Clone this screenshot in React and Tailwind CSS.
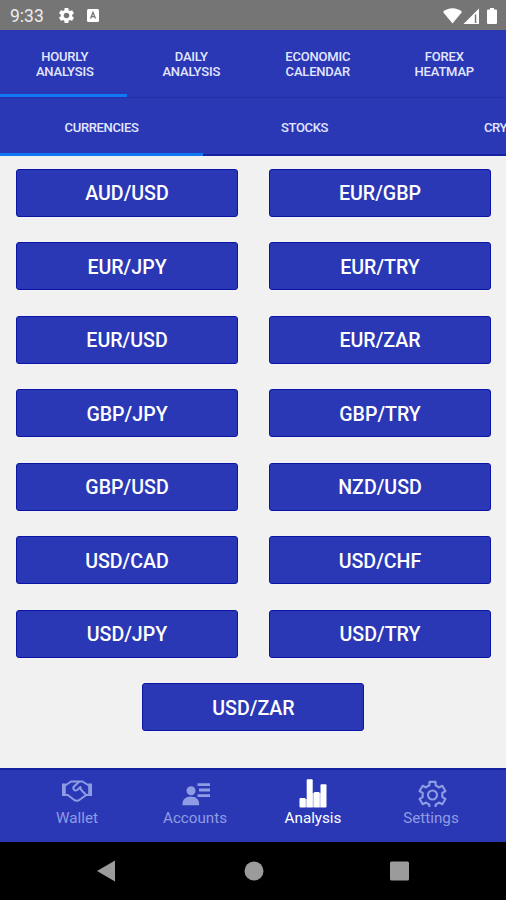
import React, { useState } from 'react';
import { MdSettings } from 'react-icons/md';

const SECTIONS = [
    ['HOURLY', 'ANALYSIS'],
    ['DAILY', 'ANALYSIS'],
    ['ECONOMIC', 'CALENDAR'],
    ['FOREX', 'HEATMAP'],
];

const MARKETS = ['CURRENCIES', 'STOCKS', 'CRYPTO'];

const PAIRS = [
    'AUD/USD', 'EUR/GBP',
    'EUR/JPY', 'EUR/TRY',
    'EUR/USD', 'EUR/ZAR',
    'GBP/JPY', 'GBP/TRY',
    'GBP/USD', 'NZD/USD',
    'USD/CAD', 'USD/CHF',
    'USD/JPY', 'USD/TRY',
    'USD/ZAR',
];

function WalletIcon() {
    return (
        <svg className="mb-1.5" width="30" height="22" viewBox="0 0 30 22" fill="none" stroke="currentColor" strokeWidth="2" strokeLinejoin="round" strokeLinecap="round">
            <path d="M0 3.500h3.800v12.500H0zM26.200 3.500H30v12.500h-3.800z" fill="currentColor" stroke="none" />
            <path d="M4 5L9 1.500h11.500L26 5" />
            <path d="M4 15h1.800l6.200 4.800q2.800 1.700 5.600 0L24.200 15H26" />
            <path d="M17 1.800L12 6.500c-1.800 2 .5 5.200 3.300 3.500l3.200-3c-.8 3.200 2 3.500 5.500 7.800" />
        </svg>
    );
}

function AccountsIcon() {
    return (
        <svg className="ml-px" width="28" height="24" viewBox="0 0 28 24" fill="currentColor">
            <circle cx="9" cy="8.800" r="4.500" />
            <path d="M0.500 23.300v-1.800c0-4.200 3.500-7 8.300-7s8.300 2.800 8.300 7v1.800z" />
            <path d="M15.500 1.200H28v2.800H15.500zM17 6.600h11v2.800H17zM15.500 12.200H28V15H15.500z" />
        </svg>
    );
}

function AnalysisIcon() {
    return (
        <svg width="28" height="29" viewBox="0 0 28 29" fill="currentColor">
            <path d="M6 20h2v8.500H6zM13 14h2v14.500h-2zM20 14h2v14.500h-2z" opacity="0.65" />
            <rect x="0.500" y="19" width="6" height="9.500" rx="1" />
            <rect x="7.700" y="0.300" width="6" height="28.200" rx="1" />
            <rect x="14.800" y="13" width="5.800" height="15.500" rx="1" />
            <rect x="21.500" y="5.300" width="6" height="23.200" rx="1" />
        </svg>
    );
}

function SettingsIcon() {
    return (
        <svg className="ml-[3px]" width="29" height="27" viewBox="-14.5 -15 29 27" fill="none" stroke="currentColor" strokeWidth="2.100" strokeLinejoin="round">
            <path d="M-3.200-9.400L-3-13.100H3L3.200-9.400Q5 -8.800 6.500-7.500L9.800-9.200L12.900-4L9.700-1.900Q10 0 9.700 1.900L12.900 4L9.800 9.200L6.500 7.500Q5 8.800 3.200 9.400L3 13.100H-3L-3.200 9.400Q-5 8.800-6.500 7.500L-9.800 9.200L-12.900 4L-9.700 1.900Q-10 0-9.700-1.900L-12.900-4L-9.800-9.200L-6.500-7.500Q-5-8.800-3.200-9.400z" />
            <circle r="4.500" />
        </svg>
    );
}

const NAV = [
    { label: 'Wallet', icon: <WalletIcon /> },
    { label: 'Accounts', icon: <AccountsIcon /> },
    { label: 'Analysis', icon: <AnalysisIcon /> },
    { label: 'Settings', icon: <SettingsIcon /> },
];

function StatusBar() {
    return (
        <div className="flex h-[30px] shrink-0 items-center justify-between bg-[#757575] pl-[10px] pr-[7px] pt-px text-white">
            <div className="flex items-center">
                <span className="w-[47px] pt-0.5 text-[17.5px] leading-none text-[#ececec]">9:33</span>
                <MdSettings size={19} />
                <svg className="ml-[11px]" width="12" height="13" viewBox="0 0 12 13">
                    <rect width="12" height="13" rx="1.500" fill="#fff" />
                    <path d="M3.500 9.500L6 3.500l2.500 6M4.300 7.700h3.400" fill="none" stroke="#757575" strokeWidth="1.300" />
                </svg>
            </div>
            <svg width="56" height="18" viewBox="0 0 56 18" fill="#fff">
                <path d="M0 5C5 0 14 0 19 5L9.500 16.500z" />
                <path d="M36 1.500V17H20.500z" />
                <path d="M31.800 7.500h1.500v8.500h-1.500z" fill="#757575" />
                <path d="M45 2.500h2V1h4v1.500h2a1 1 0 0 1 1 1V16a1 1 0 0 1-1 1h-8a1 1 0 0 1-1-1V3.500a1 1 0 0 1 1-1z" />
            </svg>
        </div>
    );
}

export default function App() {
    const [section, setSection] = useState(0);
    const [market, setMarket] = useState(0);
    const [screen, setScreen] = useState('Analysis');

    return (
        <div className="flex h-[900px] w-[506px] flex-col overflow-hidden bg-[#f1f1f1] font-['Roboto',sans-serif]">
            <StatusBar />

            {/* Section tabs */}
            <div className="grid h-[67px] shrink-0 grid-cols-4 bg-[#2a38b6] text-[#e3e6ff]">
                {SECTIONS.map(([top, bottom], i) => (
                    <button
                        key={top}
                        onClick={() => setSection(i)}
                        className={`border-b-[3px] pl-[3px] pt-[3px] text-[13px] font-medium leading-[15px] tracking-[-0.2px] ${i === section ? 'border-[#1279f5]' : 'border-transparent'}`}
                    >
                        {top}<br />{bottom}
                    </button>
                ))}
            </div>

            {/* Market tabs */}
            <div className="flex h-[59px] shrink-0 overflow-hidden border-t border-[#2430a8] bg-[#2a38b6] text-[#e3e6ff]">
                {MARKETS.map((name, i) => (
                    <button
                        key={name}
                        onClick={() => setMarket(i)}
                        className="flex w-[203px] shrink-0 flex-col justify-between pt-[22px] text-[13px] font-medium leading-[15px] tracking-[-0.35px]"
                    >
                        <span className="w-full text-center">{name}</span>
                        <span className={`w-full ${i === market ? 'h-[3px] bg-[#1279f5]' : 'h-[2px] bg-[#1722a2]'}`} />
                    </button>
                ))}
            </div>

            {/* Currency pairs */}
            <div className="flex flex-1 flex-wrap content-start justify-center gap-x-[31px] gap-y-[25.5px] pt-[12.5px]">
                {PAIRS.map((pair) => (
                    <button
                        key={pair}
                        className="h-12 w-[222px] rounded-[3px] border border-[#0c14a6] bg-[#2a38b6] pl-px pt-[3px] text-[19.6px] font-medium leading-none text-white"
                    >
                        {pair}
                    </button>
                ))}
            </div>

            {/* Bottom navigation */}
            <div className="flex h-[74px] shrink-0 justify-center border-t-2 border-[#1722a2] bg-[#2a38b6] pl-[18px] pr-[16px]">
                {NAV.map(({ label, icon }) => (
                    <button
                        key={label}
                        onClick={() => setScreen(label)}
                        className={`flex w-[118px] flex-col items-center pt-[9px] ${label === screen ? 'text-white' : 'text-[#8f9ce3]'}`}
                    >
                        <span className="flex h-[29px] items-center justify-center">{icon}</span>
                        <span className="text-[15.2px] leading-[20px]">{label}</span>
                    </button>
                ))}
            </div>

            {/* System buttons */}
            <div className="flex h-[58px] shrink-0 items-center justify-center bg-black">
                <svg width="312" height="22" viewBox="0 0 312 22" fill="#9b9b9b">
                    <path d="M0 11L18 0.500v21z" />
                    <circle cx="157" cy="11" r="9.500" />
                    <rect x="293" y="1.500" width="19" height="19" rx="1.500" />
                </svg>
            </div>
        </div>
    );
}
